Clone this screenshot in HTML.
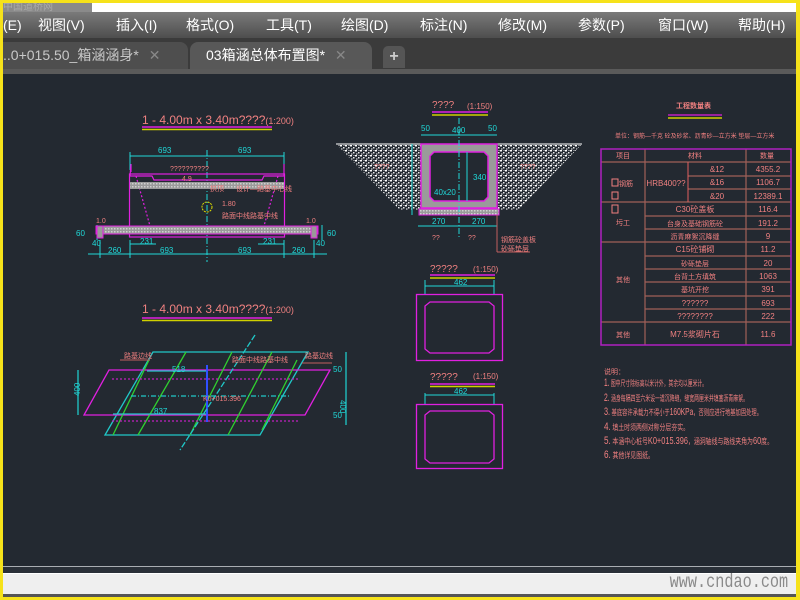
<!DOCTYPE html>
<html><head><meta charset="utf-8"><style>
html,body{margin:0;padding:0;width:800px;height:600px;overflow:hidden;background:#f6e21a;font-family:"Liberation Sans","Noto Sans CJK SC",sans-serif}
.abs{position:absolute}
</style></head><body>
<div class="abs" style="left:3px;top:3px;width:793px;height:9px;background:#fff"></div>
<div class="abs" style="left:3px;top:3px;width:89px;height:9px;background:#8a8a8a;color:#aaa;font-size:10px;line-height:9px;overflow:hidden">中国道桥网</div>
<div class="abs" style="left:3px;top:12px;width:793px;height:26px;background:linear-gradient(#7a7a7a,#4e4e4e)"></div>
<div class="abs" style="left:3px;top:12px;width:793px;height:26px;color:#fff;font-size:14px;line-height:26px;white-space:nowrap">
<span class="abs" style="left:0">(E)</span><span class="abs" style="left:35px">视图(V)</span><span class="abs" style="left:113px">插入(I)</span><span class="abs" style="left:183px">格式(O)</span><span class="abs" style="left:263px">工具(T)</span><span class="abs" style="left:338px">绘图(D)</span><span class="abs" style="left:417px">标注(N)</span><span class="abs" style="left:495px">修改(M)</span><span class="abs" style="left:575px">参数(P)</span><span class="abs" style="left:655px">窗口(W)</span><span class="abs" style="left:735px">帮助(H)</span></div>
<div class="abs" style="left:3px;top:38px;width:793px;height:31px;background:#3b3b3b"></div>
<div class="abs" style="left:3px;top:42px;height:27px;background:#4e4e4e;border-radius:0 8px 0 0;color:#c8c8c8;font-size:14px;line-height:27px;white-space:nowrap;overflow:hidden;width:185px">..0+015.50_箱涵涵身* <span style="color:#888;margin-left:6px">✕</span></div>
<div class="abs" style="left:190px;top:42px;width:182px;height:27px;background:#585858;border-radius:8px 8px 0 0;color:#fff;font-size:14px;line-height:27px;white-space:nowrap"><span style="margin-left:16px">03箱涵总体布置图*</span> <span style="color:#888;margin-left:6px">✕</span></div>
<div class="abs" style="left:383px;top:46px;width:22px;height:22px;background:#555;border-radius:5px 5px 0 0;color:#ccc;font-size:16px;line-height:22px;text-align:center;font-weight:bold">+</div>
<div class="abs" style="left:3px;top:69px;width:793px;height:5px;background:#5a5a5a"></div>
<div class="abs" style="left:3px;top:74px;width:793px;height:492px;background:#232931"></div>
<div class="abs" style="left:3px;top:566px;width:793px;height:1px;background:#a9adb2"></div>
<div class="abs" style="left:3px;top:567px;width:793px;height:6px;background:#2a3038"></div>
<div class="abs" style="left:3px;top:573px;width:793px;height:21px;background:#efefef;border-top:1px solid #fff"></div>
<div class="abs" style="left:640px;top:570px;width:148px;height:24px;color:#8a8a8a;font-family:'Liberation Mono',monospace;font-size:19px;line-height:24px;transform:scaleX(0.8);transform-origin:right;text-align:right">www.cndao.com</div>
<div class="abs" style="left:3px;top:594px;width:793px;height:3px;background:#555"></div>

<svg class="abs" style="left:0;top:0" width="800" height="600" viewBox="0 0 800 600" font-family="Liberation Sans, Noto Sans CJK SC, sans-serif">
<defs>
<pattern id="sp" width="5" height="5" patternUnits="userSpaceOnUse"><rect width="5" height="5" fill="#232931"/><rect x="0" y="0" width="2" height="1.5" fill="#fff"/><rect x="3" y="2" width="1.5" height="1.5" fill="#eee"/><rect x="1" y="3.5" width="1.5" height="1" fill="#fff"/><rect x="3.5" y="0" width="1" height="1" fill="#ddd"/></pattern>
<pattern id="gh" width="3" height="3" patternUnits="userSpaceOnUse"><rect width="3" height="3" fill="#9a9a9a"/><rect width="1.5" height="1.5" fill="#d0d0d0"/></pattern>
</defs>
<g fill="#f08080" font-size="12">
<text x="142" y="124">1 - 4.00m x 3.40m????<tspan font-size="9">(1:200)</tspan></text>
<text x="142" y="313">1 - 4.00m x 3.40m????<tspan font-size="9">(1:200)</tspan></text>
</g>
<g stroke-width="1.5"><line x1="142" y1="127" x2="272" y2="127" stroke="#e020e0"/><line x1="142" y1="129.5" x2="272" y2="129.5" stroke="#d0d000"/>
<line x1="142" y1="318" x2="272" y2="318" stroke="#e020e0"/><line x1="142" y1="320.5" x2="272" y2="320.5" stroke="#d0d000"/></g>
<g stroke="#20d8d8" fill="none" stroke-width="1">
<line x1="130" y1="156" x2="284" y2="156"/><line x1="130" y1="152" x2="130" y2="170"/><line x1="284" y1="152" x2="284" y2="170"/>
<line x1="207" y1="150" x2="207" y2="262" stroke-dasharray="6 2 1 2"/>
<line x1="88" y1="254" x2="327" y2="254"/><line x1="100" y1="240" x2="100" y2="258"/><line x1="130" y1="240" x2="130" y2="258"/><line x1="284" y1="240" x2="284" y2="258"/><line x1="314" y1="240" x2="314" y2="258"/>
<line x1="130" y1="244" x2="156" y2="244"/><line x1="258" y1="244" x2="284" y2="244"/>
<line x1="97" y1="225" x2="97" y2="240"/><line x1="322" y1="225" x2="322" y2="240"/>
</g>
<g fill="#20d8d8" font-size="8"><text x="158" y="153">693</text><text x="238" y="153">693</text><text x="108" y="253">260</text><text x="160" y="253">693</text><text x="238" y="253">693</text><text x="292" y="253">260</text><text x="140" y="244">231</text><text x="263" y="244">231</text><text x="92" y="246">40</text><text x="316" y="246">40</text><text x="76" y="236">60</text><text x="327" y="236">60</text></g>
<g stroke="#e020e0" fill="none" stroke-width="1.2">
<polyline points="131,172 131,164 130,176 152,176 154,180 262,180 264,176 284,176 284,164"/>
<rect x="129.5" y="174" width="155" height="63"/>
<line x1="136" y1="176" x2="150" y2="226" stroke-dasharray="2 2"/><line x1="278" y1="176" x2="264" y2="226" stroke-dasharray="2 2"/>
</g>
<rect x="130" y="182" width="154" height="7" fill="url(#gh)"/>
<rect x="96" y="226" width="222" height="8" fill="url(#gh)" stroke="#e020e0"/>
<rect x="97" y="226" width="6" height="12" fill="#999" stroke="#e020e0"/><rect x="311" y="226" width="6" height="12" fill="#999" stroke="#e020e0"/>
<g fill="#f08080" font-size="7"><text x="170" y="171">??????????</text><text x="182" y="181">4.9</text><text x="210" y="191">拱顶</text><text x="236" y="191">设计—路基中心线</text><text x="222" y="206">1.80</text><text x="222" y="218">路面中线路基中线</text><text x="96" y="223">1.0</text><text x="306" y="223">1.0</text></g>
<circle cx="207" cy="207" r="5" stroke="#e0e000" fill="none" stroke-dasharray="2 1"/>

<g fill="none" stroke-width="1.3">
<polygon points="153,352 308,352 260,435 105,435" stroke="#20c8c8"/>
<polygon points="109,370 330,370 305,415 84,415" stroke="#e020e0"/>
<line x1="149" y1="360" x2="113" y2="435" stroke="#30d030"/><line x1="186" y1="352" x2="138" y2="435" stroke="#30d030"/><line x1="232" y1="352" x2="190" y2="435" stroke="#30d030"/><line x1="272" y1="352" x2="228" y2="435" stroke="#30d030"/><line x1="297" y1="360" x2="262" y2="430" stroke="#30d030"/>
<line x1="112" y1="379" x2="300" y2="379" stroke="#c020c0" stroke-dasharray="2 2"/><line x1="112" y1="421" x2="300" y2="421" stroke="#c020c0" stroke-dasharray="2 2"/>
<line x1="131" y1="396" x2="290" y2="396" stroke="#20c8c8" stroke-dasharray="5 2 1 2"/>
<line x1="147" y1="371" x2="206" y2="371" stroke="#20c8c8"/><line x1="113" y1="414" x2="206" y2="414" stroke="#20c8c8"/>
<line x1="207" y1="365" x2="207" y2="422" stroke="#3050ff" stroke-width="2"/>
<line x1="255" y1="335" x2="180" y2="450" stroke="#20c8c8" stroke-dasharray="6 2"/>
<line x1="78" y1="370" x2="78" y2="415" stroke="#20c8c8"/><line x1="346" y1="352" x2="346" y2="425" stroke="#20c8c8"/>
</g>
<g fill="#20d8d8" font-size="8"><text x="172" y="372">518</text><text x="154" y="414">837</text><text x="80" y="396" transform="rotate(-90 80 396)">400</text><text x="340" y="400" transform="rotate(90 340 400)">400</text><text x="333" y="372">50</text><text x="333" y="418">50</text></g>
<g fill="#f08080" font-size="7"><text x="124" y="358">路基边线</text><text x="232" y="362">路面中线路基中线</text><text x="305" y="358">路基边线</text><text x="203" y="401">K0+015.396</text></g>
<line x1="120" y1="360" x2="150" y2="360" stroke="#c06060"/><line x1="302" y1="363" x2="332" y2="363" stroke="#c06060"/>

<text x="432" y="108" fill="#f08080" font-size="10">????</text><text x="467" y="109" fill="#f08080" font-size="8">(1:150)</text>
<line x1="432" y1="112" x2="488" y2="112" stroke="#e020e0" stroke-width="1.5"/><line x1="432" y1="115" x2="488" y2="115" stroke="#d0d000" stroke-width="1.5"/>
<polygon points="336,144 582,144 518,210 400,210" fill="url(#sp)"/>
<line x1="336" y1="144" x2="582" y2="144" stroke="#fff"/>
<rect x="421" y="144" width="76" height="64" fill="#9a9a9a" stroke="#e020e0" stroke-width="1.5"/>
<path d="M434 152 H484 L488 156 V197 L484 201 H434 L430 197 V156 Z" fill="#232931" stroke="#e020e0" stroke-width="1.5"/>
<rect x="419" y="209" width="80" height="6" fill="url(#gh)" stroke="#e020e0"/>
<g stroke="#20d8d8" fill="none"><line x1="459" y1="118" x2="459" y2="238" stroke-dasharray="6 2 1 2"/><line x1="421" y1="135" x2="497" y2="135"/><line x1="418" y1="226" x2="497" y2="226"/><line x1="412" y1="144" x2="412" y2="215"/><line x1="467" y1="152" x2="467" y2="201"/></g>
<g fill="#20d8d8" font-size="8"><text x="421" y="131">50</text><text x="452" y="133">400</text><text x="488" y="131">50</text><text x="432" y="224">270</text><text x="472" y="224">270</text><text x="434" y="195">40x20</text><text x="473" y="180">340</text></g>
<g fill="#f08080" font-size="7"><text x="374" y="169">????</text><text x="520" y="169">????</text><text x="432" y="240">??</text><text x="468" y="240">??</text><text x="501" y="242">钢筋砼盖板</text><text x="501" y="251">砂砾垫层</text></g>
<line x1="497" y1="215" x2="497" y2="252" stroke="#c06060"/><line x1="497" y1="252" x2="530" y2="252" stroke="#c06060"/>

<g fill="#f08080"><text x="430" y="272" font-size="10">?????</text><text x="473" y="272" font-size="8">(1:150)</text><text x="430" y="380" font-size="10">?????</text><text x="473" y="379" font-size="8">(1:150)</text></g>
<g stroke-width="1.5"><line x1="430" y1="275" x2="495" y2="275" stroke="#e020e0"/><line x1="430" y1="278" x2="495" y2="278" stroke="#d0d000"/><line x1="430" y1="384" x2="495" y2="384" stroke="#e020e0"/><line x1="430" y1="386.5" x2="495" y2="386.5" stroke="#d0d000"/></g>
<g stroke="#20d8d8" fill="none"><path d="M425 280 V294 M425 286 H494 M494 280 V294"/><path d="M425 393 V404 M425 395 H494 M494 393 V404"/></g>
<g fill="#20d8d8" font-size="8"><text x="454" y="285">462</text><text x="454" y="394">462</text></g>
<g stroke="#e020e0" fill="none" stroke-width="1.3">
<rect x="416.5" y="294.5" width="86" height="66"/><path d="M430 302 H489 L494 306 V349 L489 353 H430 L425 349 V306 Z"/>
<rect x="416.5" y="404.5" width="86" height="64"/><path d="M430 411 H489 L494 415 V459 L489 463 H430 L425 459 V415 Z"/>
</g>

<text x="676" y="108" fill="#f08080" font-size="7" font-weight="bold">工程数量表</text>
<line x1="668" y1="115" x2="722" y2="115" stroke="#c020c0" stroke-width="1.5"/><line x1="668" y1="118" x2="722" y2="118" stroke="#d0d000" stroke-width="1.5"/>
<text x="615" y="138" fill="#f08080" font-size="6">单位：钢筋—千克  砼及砂浆、沥青砂—立方米  垫层—立方米</text>
<g stroke="#a06058" stroke-width="1.2" fill="none">
<path d="M601 162 H791 M688 176 H791 M688 189 H791 M601 202 H791 M645 216 H791 M645 229 H791 M601 242 H791 M645 256 H791 M645 269 H791 M645 282 H791 M645 296 H791 M645 309 H791 M601 322 H791"/>
<path d="M645 149 V345 M746 149 V345"/>
</g>
<line x1="688" y1="162" x2="688" y2="202" stroke="#e06060"/>
<rect x="601" y="149" width="190" height="196" fill="none" stroke="#b020c0" stroke-width="1.5"/>
<g fill="#f08080" font-size="7" text-anchor="middle">
<text x="623" y="158">项目</text><text x="695" y="158">材料</text><text x="767" y="158">数量</text>
<text x="666" y="186" font-size="8">HRB400??</text>
<text x="717" y="172" font-size="8">&amp;12</text><text x="717" y="185" font-size="8">&amp;16</text><text x="717" y="199" font-size="8">&amp;20</text>
<text x="768" y="172" font-size="8">4355.2</text><text x="768" y="185" font-size="8">1106.7</text><text x="768" y="199" font-size="8">12389.1</text>
<text x="695" y="212" font-size="8">C30砼盖板</text><text x="768" y="212" font-size="8">116.4</text>
<text x="695" y="226">台身及基础钢筋砼</text><text x="768" y="226" font-size="8">191.2</text>
<text x="695" y="239">沥青麻絮沉降缝</text><text x="768" y="239" font-size="8">9</text>
<text x="695" y="252" font-size="8">C15砼铺砌</text><text x="768" y="252" font-size="8">11.2</text>
<text x="695" y="266">砂砾垫层</text><text x="768" y="266" font-size="8">20</text>
<text x="695" y="279">台背土方填筑</text><text x="768" y="279" font-size="8">1063</text>
<text x="695" y="292">基坑开挖</text><text x="768" y="292" font-size="8">391</text>
<text x="695" y="306" font-size="8">??????</text><text x="768" y="306" font-size="8">693</text>
<text x="695" y="319" font-size="8">????????</text><text x="768" y="319" font-size="8">222</text>
<text x="695" y="337" font-size="8">M7.5浆砌片石</text><text x="768" y="337" font-size="8">11.6</text>
<text x="623" y="225">圬工</text><text x="623" y="282">其他</text><text x="623" y="337">其他</text><text x="626" y="186">钢筋</text>
</g>
<g fill="none" stroke="#f08080"><rect x="612" y="179" width="6" height="7"/><rect x="612" y="192" width="6" height="7"/><rect x="612" y="205" width="6" height="8"/></g>

<g fill="#f08080" font-size="8" lengthAdjust="spacingAndGlyphs">
<text x="604" y="374" font-size="7">说明：</text>
<text x="604" y="386" textLength="103" lengthAdjust="spacingAndGlyphs"><tspan font-size="11">1.</tspan> 图中尺寸除标高以米计外，其余均以厘米计。</text>
<text x="604" y="401" textLength="144" lengthAdjust="spacingAndGlyphs"><tspan font-size="11">2.</tspan> 涵身每隔四至六米设一道沉降缝，缝宽两厘米并填塞沥青麻絮。</text>
<text x="604" y="415" textLength="158" lengthAdjust="spacingAndGlyphs"><tspan font-size="11">3.</tspan> 基底容许承载力不得小于<tspan font-size="10">160KPa</tspan>，否则应进行地基加固处理。</text>
<text x="604" y="430" textLength="85" lengthAdjust="spacingAndGlyphs"><tspan font-size="11">4.</tspan> 填土时须两侧对称分层夯实。</text>
<text x="604" y="444" textLength="169" lengthAdjust="spacingAndGlyphs"><tspan font-size="11">5.</tspan> 本涵中心桩号<tspan font-size="10">K0+015.396</tspan>，涵洞轴线与路线夹角为<tspan font-size="10">60</tspan>度。</text>
<text x="604" y="458" textLength="50" lengthAdjust="spacingAndGlyphs"><tspan font-size="11">6.</tspan> 其他详见图纸。</text>
</g>
</svg>
</body></html>
